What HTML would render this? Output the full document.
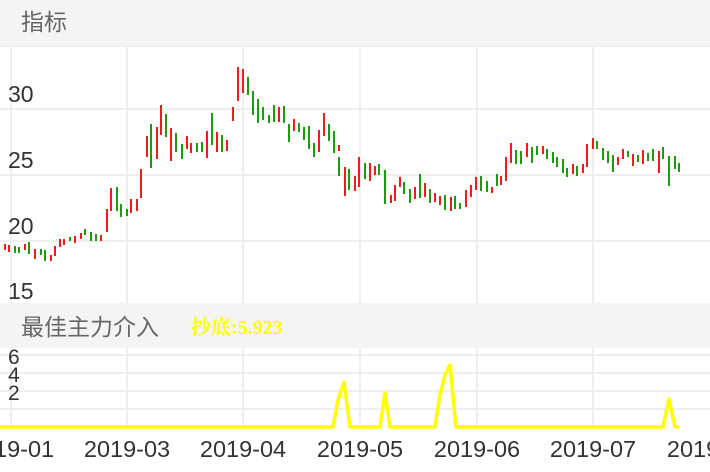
<!DOCTYPE html>
<html><head><meta charset="utf-8"><style>
html,body{margin:0;padding:0;background:#fff;width:710px;height:472px;overflow:hidden}
svg{display:block}
text{font-family:"Liberation Sans","Noto Sans CJK SC",sans-serif}
</style></head><body>
<svg width="710" height="472" viewBox="0 0 710 472" xmlns="http://www.w3.org/2000/svg">
<rect x="0" y="0" width="710" height="45" fill="#f4f4f4"/>
<text x="21" y="30" font-size="23" fill="#666">指标</text>
<g stroke="#eeeeee" stroke-width="2">
<line x1="0" y1="46" x2="710" y2="46"/>
<line x1="0" y1="109" x2="710" y2="109"/>
<line x1="0" y1="175" x2="710" y2="175"/>
<line x1="0" y1="241" x2="710" y2="241"/>
<line x1="11" y1="45" x2="11" y2="303"/>
<line x1="127" y1="45" x2="127" y2="303"/>
<line x1="243" y1="45" x2="243" y2="303"/>
<line x1="360" y1="45" x2="360" y2="303"/>
<line x1="477" y1="45" x2="477" y2="303"/>
<line x1="593" y1="45" x2="593" y2="303"/>
</g>
<g font-size="23" fill="#333">
<text x="8" y="102">30</text>
<text x="8" y="168">25</text>
<text x="8" y="234">20</text>
<text x="8" y="299">15</text>
</g>
<g stroke-width="2">
<g stroke="#ee1c1c">
<line x1="5" y1="244" x2="5" y2="250"/><line x1="9" y1="245" x2="9" y2="252"/><line x1="25" y1="244" x2="25" y2="250"/>
<line x1="35" y1="249" x2="35" y2="259"/><line x1="51" y1="255" x2="51" y2="261"/><line x1="55" y1="246" x2="55" y2="256"/>
<line x1="60" y1="239" x2="60" y2="247"/><line x1="64" y1="239" x2="64" y2="245"/><line x1="75" y1="236" x2="75" y2="243"/>
<line x1="81" y1="233" x2="81" y2="239"/><line x1="101" y1="235" x2="101" y2="241"/><line x1="107" y1="209" x2="107" y2="232"/>
<line x1="111" y1="188" x2="111" y2="211"/><line x1="131" y1="199" x2="131" y2="213"/><line x1="137" y1="199" x2="137" y2="211"/>
<line x1="141" y1="169" x2="141" y2="198"/><line x1="147" y1="136" x2="147" y2="157"/><line x1="157" y1="127" x2="157" y2="159"/>
<line x1="161" y1="105" x2="161" y2="135"/><line x1="171" y1="128" x2="171" y2="161"/><line x1="187" y1="136" x2="187" y2="149"/>
<line x1="191" y1="143" x2="191" y2="153"/><line x1="207" y1="131" x2="207" y2="158"/><line x1="217" y1="132" x2="217" y2="152"/>
<line x1="227" y1="140" x2="227" y2="151"/><line x1="233" y1="107" x2="233" y2="121"/><line x1="238" y1="67" x2="238" y2="101"/>
<line x1="243" y1="69" x2="243" y2="93"/><line x1="279" y1="107" x2="279" y2="122"/><line x1="294" y1="119" x2="294" y2="131"/>
<line x1="319" y1="130" x2="319" y2="152"/><line x1="324" y1="113" x2="324" y2="136"/><line x1="339" y1="145" x2="339" y2="151"/>
<line x1="345" y1="167" x2="345" y2="196"/><line x1="355" y1="176" x2="355" y2="191"/><line x1="359" y1="157" x2="359" y2="187"/>
<line x1="370" y1="163" x2="370" y2="181"/><line x1="375" y1="166" x2="375" y2="175"/><line x1="391" y1="195" x2="391" y2="203"/>
<line x1="395" y1="185" x2="395" y2="201"/><line x1="400" y1="177" x2="400" y2="187"/><line x1="415" y1="187" x2="415" y2="199"/>
<line x1="425" y1="183" x2="425" y2="197"/><line x1="435" y1="193" x2="435" y2="202"/><line x1="440" y1="196" x2="440" y2="205"/>
<line x1="451" y1="197" x2="451" y2="211"/><line x1="466" y1="190" x2="466" y2="207"/><line x1="471" y1="185" x2="471" y2="197"/>
<line x1="476" y1="177" x2="476" y2="190"/><line x1="492" y1="187" x2="492" y2="193"/><line x1="501" y1="176" x2="501" y2="185"/>
<line x1="506" y1="157" x2="506" y2="181"/><line x1="511" y1="143" x2="511" y2="163"/><line x1="527" y1="143" x2="527" y2="157"/>
<line x1="543" y1="146" x2="543" y2="154"/><line x1="573" y1="164" x2="573" y2="174"/><line x1="583" y1="164" x2="583" y2="173"/>
<line x1="587" y1="144" x2="587" y2="167"/><line x1="593" y1="138" x2="593" y2="149"/><line x1="618" y1="157" x2="618" y2="165"/>
<line x1="623" y1="149" x2="623" y2="159"/><line x1="633" y1="154" x2="633" y2="166"/><line x1="643" y1="150" x2="643" y2="164"/>
<line x1="659" y1="151" x2="659" y2="173"/>
</g>
<g stroke="#1c9c0c">
<line x1="15" y1="246" x2="15" y2="253"/><line x1="19" y1="247" x2="19" y2="253"/><line x1="29" y1="242" x2="29" y2="254"/>
<line x1="41" y1="249" x2="41" y2="255"/><line x1="45" y1="250" x2="45" y2="261"/><line x1="70" y1="237" x2="70" y2="241"/>
<line x1="85" y1="229" x2="85" y2="235"/><line x1="91" y1="232" x2="91" y2="241"/><line x1="96" y1="234" x2="96" y2="241"/>
<line x1="117" y1="187" x2="117" y2="211"/><line x1="121" y1="204" x2="121" y2="217"/><line x1="127" y1="209" x2="127" y2="216"/>
<line x1="151" y1="124" x2="151" y2="168"/><line x1="166" y1="114" x2="166" y2="137"/><line x1="176" y1="133" x2="176" y2="152"/>
<line x1="182" y1="144" x2="182" y2="159"/><line x1="197" y1="143" x2="197" y2="152"/><line x1="202" y1="142" x2="202" y2="152"/>
<line x1="212" y1="113" x2="212" y2="145"/><line x1="222" y1="135" x2="222" y2="152"/><line x1="248" y1="77" x2="248" y2="95"/>
<line x1="253" y1="91" x2="253" y2="115"/><line x1="258" y1="99" x2="258" y2="123"/><line x1="263" y1="107" x2="263" y2="120"/>
<line x1="269" y1="115" x2="269" y2="123"/><line x1="274" y1="105" x2="274" y2="122"/><line x1="284" y1="106" x2="284" y2="123"/>
<line x1="289" y1="124" x2="289" y2="142"/><line x1="299" y1="123" x2="299" y2="132"/><line x1="304" y1="127" x2="304" y2="140"/>
<line x1="309" y1="126" x2="309" y2="149"/><line x1="314" y1="143" x2="314" y2="157"/><line x1="329" y1="124" x2="329" y2="141"/>
<line x1="334" y1="131" x2="334" y2="153"/><line x1="339" y1="157" x2="339" y2="176"/><line x1="349" y1="169" x2="349" y2="190"/>
<line x1="365" y1="163" x2="365" y2="179"/><line x1="379" y1="164" x2="379" y2="175"/><line x1="385" y1="170" x2="385" y2="204"/>
<line x1="404" y1="182" x2="404" y2="194"/><line x1="410" y1="189" x2="410" y2="203"/><line x1="420" y1="174" x2="420" y2="198"/>
<line x1="430" y1="189" x2="430" y2="203"/><line x1="445" y1="195" x2="445" y2="210"/><line x1="455" y1="196" x2="455" y2="209"/>
<line x1="460" y1="203" x2="460" y2="209"/><line x1="481" y1="176" x2="481" y2="191"/><line x1="487" y1="181" x2="487" y2="192"/>
<line x1="497" y1="174" x2="497" y2="186"/><line x1="516" y1="150" x2="516" y2="164"/><line x1="521" y1="151" x2="521" y2="164"/>
<line x1="532" y1="147" x2="532" y2="163"/><line x1="537" y1="146" x2="537" y2="155"/><line x1="547" y1="149" x2="547" y2="159"/>
<line x1="553" y1="152" x2="553" y2="163"/><line x1="557" y1="157" x2="557" y2="167"/><line x1="563" y1="159" x2="563" y2="173"/>
<line x1="567" y1="168" x2="567" y2="177"/><line x1="577" y1="166" x2="577" y2="176"/><line x1="597" y1="141" x2="597" y2="149"/>
<line x1="603" y1="148" x2="603" y2="160"/><line x1="608" y1="151" x2="608" y2="163"/><line x1="613" y1="155" x2="613" y2="172"/>
<line x1="628" y1="151" x2="628" y2="157"/><line x1="638" y1="155" x2="638" y2="162"/><line x1="648" y1="153" x2="648" y2="161"/>
<line x1="653" y1="149" x2="653" y2="161"/><line x1="663" y1="147" x2="663" y2="159"/><line x1="669" y1="156" x2="669" y2="186"/>
<line x1="675" y1="156" x2="675" y2="169"/><line x1="679" y1="163" x2="679" y2="172"/>
</g>
</g>
<rect x="0" y="303" width="710" height="45" fill="#f4f4f4"/>
<text x="21" y="335" font-size="23" fill="#666">最佳主力介入</text>
<text x="191" y="334" font-size="20" font-weight="bold" fill="#ffff00" style="font-family:'Liberation Serif','Noto Serif CJK SC',serif">抄底:5.923</text>
<g stroke="#eeeeee" stroke-width="2">
<line x1="0" y1="355" x2="710" y2="355"/>
<line x1="0" y1="373" x2="710" y2="373"/>
<line x1="0" y1="391" x2="710" y2="391"/>
<line x1="0" y1="409" x2="710" y2="409"/>
<line x1="11" y1="348" x2="11" y2="427"/>
<line x1="127" y1="348" x2="127" y2="427"/>
<line x1="243" y1="348" x2="243" y2="427"/>
<line x1="360" y1="348" x2="360" y2="427"/>
<line x1="477" y1="348" x2="477" y2="427"/>
<line x1="593" y1="348" x2="593" y2="427"/>
</g>
<g font-size="21" fill="#333">
<text x="8" y="364">6</text>
<text x="8" y="382">4</text>
<text x="8" y="400">2</text>
</g>
<polyline fill="none" stroke="#ffff00" stroke-width="3.5" stroke-linejoin="round" points="0,427 333,427 338,400 344,382 350,427 380,427 385,393 390,427 435,427 440,395 445,375 450,365 456,427 663,427 669,399 675,427 679,427"/>
<g font-size="23.5" fill="#333" text-anchor="middle">
<text x="11" y="457">2019-01</text>
<text x="127" y="457">2019-03</text>
<text x="243" y="457">2019-04</text>
<text x="360" y="457">2019-05</text>
<text x="477" y="457">2019-06</text>
<text x="593" y="457">2019-07</text>
<text x="710" y="457">2019-08</text>
</g>
</svg>
</body></html>
